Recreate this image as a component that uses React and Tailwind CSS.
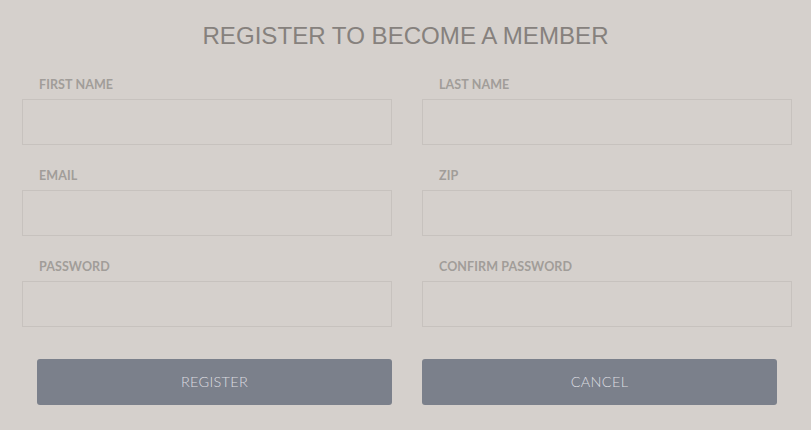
export default function App() {
  const fields = [
    ["FIRST NAME", "LAST NAME"],
    ["EMAIL", "ZIP"],
    ["PASSWORD", "CONFIRM PASSWORD"],
  ];

  return (
    <div className="w-[811px] h-[430px] bg-[#d5d0cc] overflow-hidden">
      <h1 className="pt-[21px] text-center text-[24.1px] leading-[30px] text-[#86817d] font-['Liberation_Sans',sans-serif]">
        REGISTER TO BECOME A MEMBER
      </h1>

      <form className="pl-[22px] pt-[20px] grid grid-cols-[370px_370px] gap-x-[30px]">
        {fields.flat().map((label) => (
          <div key={label} className="mb-[17px]">
            <label className="block pl-[17px] pt-[7px] h-[21px] text-[12.5px] leading-[14px] font-bold text-[#a19d99] font-['Lato',sans-serif] tracking-[0.1px]">
              {label}
            </label>
            <input
              type={label.includes("PASSWORD") ? "password" : "text"}
              className="mt-[7px] block w-[370px] h-[46px] bg-[#d5d0cc] border border-[#c7c2be] outline-none"
            />
          </div>
        ))}

        <div className="pl-[15px] pt-[15px]">
          <button
            type="button"
            className="w-[355px] h-[46px] rounded-[3px] bg-[#7b808b] text-[#dcdce0] text-[14.5px] font-light font-['Lato',sans-serif] tracking-[0.3px]"
          >
            REGISTER
          </button>
        </div>
        <div className="pt-[15px]">
          <button
            type="button"
            className="w-[355px] h-[46px] rounded-[3px] bg-[#7b808b] text-[#dcdce0] text-[14.5px] font-light font-['Lato',sans-serif] tracking-[0.3px]"
          >
            CANCEL
          </button>
        </div>
      </form>
    </div>
  );
}
